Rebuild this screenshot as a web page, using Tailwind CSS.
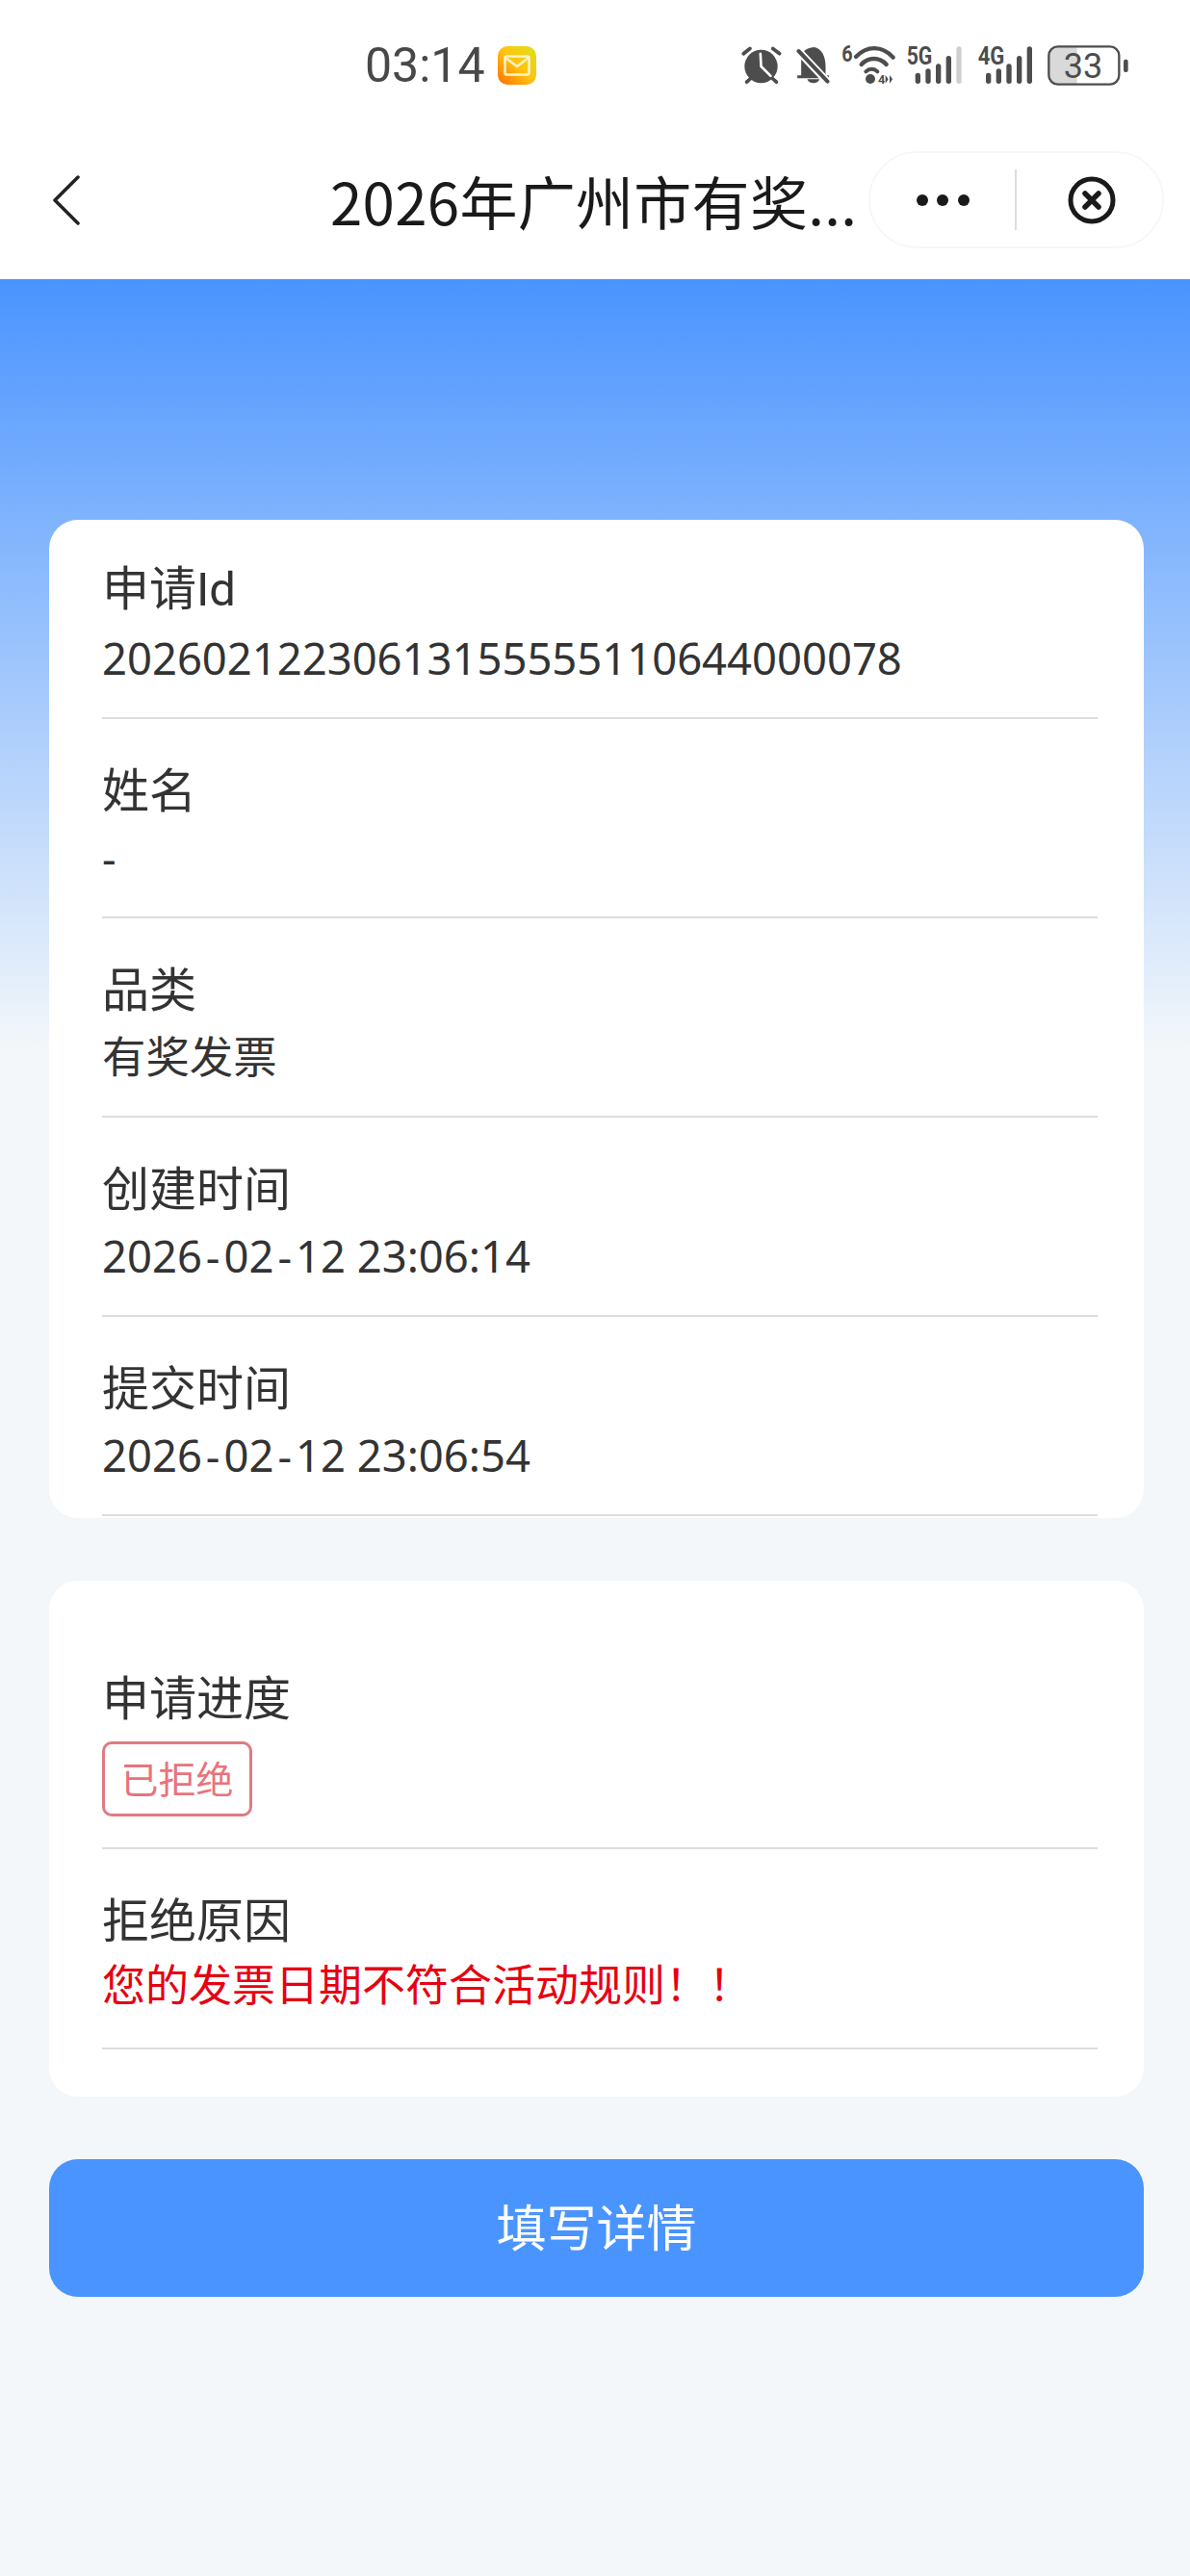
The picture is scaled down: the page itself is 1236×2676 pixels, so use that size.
<!DOCTYPE html>
<html lang="zh-CN">

<head>
    <meta charset="UTF-8" />
    <meta name="viewport" content="width=device-width, initial-scale=1.0" />
    <title>申请详情</title>
    <script src="https://cdn.jsdelivr.net/npm/@tailwindcss/browser@4"></script>
</head>

<body class="bg-[#f3f7fa] text-[#333] font-['Noto_Sans','Noto_Sans_CJK_SC',sans-serif]">
    <div class="w-[1236px] h-[2676px] flex flex-col overflow-hidden">

        <!-- status bar + nav -->
        <header class="bg-white h-[290px] shrink-0">
            <div class="h-[136px] flex items-center pl-[379px]">
                <span class="font-['Roboto',sans-serif] text-[50px] leading-none text-[#484848]">03:14</span>
                <div class="ml-[13px] w-10 h-10 rounded-[10px] bg-linear-to-bl from-[#d9e21a] via-[#ffc20e] to-[#ff6a00] flex items-center justify-center">
                    <svg width="28" height="22" viewBox="0 0 28 22" fill="none" stroke="#fdf3c8" stroke-width="2.5">
                        <rect x="1.5" y="1.5" width="25" height="19" rx="2" />
                        <path d="M2 3l12 9 12-9" />
                    </svg>
                </div>
                <div class="ml-[212px] flex items-center h-[44px]">
                    <!-- alarm -->
                    <svg width="43" height="40" viewBox="85 85 130 120" fill="none" stroke="#4d4d4d" stroke-linecap="round">
                        <circle cx="150" cy="148" r="52" fill="#4d4d4d" stroke="none" />
                        <path d="M95 108l20-16M187 92l21 16M105 197l13-12M198 197l-13-12" stroke-width="11" />
                        <path d="M148 108l2 40 30 30" stroke="#fff" stroke-width="8" />
                    </svg>
                    <!-- muted bell -->
                    <svg class="ml-[14px]" width="36" height="40" viewBox="258 85 107 120" fill="none">
                        <path d="M316 88c24 4 36 28 36 62v26h10v9H264v-9h12v-52c0-20 14-34 40-36z" fill="#4d4d4d" />
                        <path d="M295 188h38c-4 16-34 16-38 0z" fill="#4d4d4d" />
                        <path d="M262 94l98 104" stroke="#fff" stroke-width="24" />
                        <path d="M268 100l90 95" stroke="#4d4d4d" stroke-width="12" stroke-linecap="round" />
                    </svg>
                    <!-- wifi -->
                    <svg class="ml-[12px] overflow-visible" width="56" height="40" viewBox="400 85 168 120" fill="none" stroke="#4d4d4d" stroke-linecap="round">
                        <text x="401" y="134" font-size="70" font-weight="700" fill="#4d4d4d" stroke="none" textLength="34" lengthAdjust="spacingAndGlyphs" class="font-['Roboto',sans-serif]">6</text>
                        <path d="M445 118c34-36 82-36 116 2" stroke-width="13" />
                        <path d="M462 142c22-24 56-24 78 0" stroke-width="13" />
                        <path d="M476 164c10-10 26-10 36 0" stroke-width="12" />
                        <circle cx="490" cy="187" r="15" fill="#4d4d4d" stroke="none" />
                        <text x="514" y="202" font-size="38" font-weight="700" fill="#4d4d4d" stroke="none" class="font-['Roboto',sans-serif]">4</text>
                        <path d="M537 201v-26l9 13zM550 175v26l9-13z" fill="#4d4d4d" stroke="none" />
                    </svg>
                    <!-- 5G -->
                    <svg class="ml-[11px] overflow-visible" width="58" height="40" viewBox="603 85 174 120" fill="#4d4d4d">
                        <text x="605" y="142" font-size="76" font-weight="700" textLength="80" lengthAdjust="spacingAndGlyphs" class="font-['Roboto',sans-serif]">5G</text>
                        <rect x="632" y="168" width="16" height="34" rx="8" />
                        <rect x="664" y="155" width="16" height="47" rx="8" />
                        <rect x="696" y="140" width="16" height="62" rx="8" />
                        <rect x="728" y="115" width="16" height="87" rx="8" />
                        <rect x="760" y="86" width="16" height="116" rx="8" fill="#cfcfcf" />
                    </svg>
                    <!-- 4G -->
                    <svg class="ml-[16px] overflow-visible" width="58" height="40" viewBox="823 85 174 120" fill="#4d4d4d">
                        <text x="825" y="142" font-size="76" font-weight="700" textLength="83" lengthAdjust="spacingAndGlyphs" class="font-['Roboto',sans-serif]">4G</text>
                        <rect x="850" y="168" width="16" height="34" rx="8" />
                        <rect x="882" y="155" width="16" height="47" rx="8" />
                        <rect x="914" y="140" width="16" height="62" rx="8" />
                        <rect x="946" y="115" width="16" height="87" rx="8" />
                        <rect x="978" y="86" width="16" height="116" rx="8" />
                    </svg>
                    <!-- battery -->
                    <svg class="ml-[15px]" width="84" height="42" viewBox="1043 81 252 126">
                        <path d="M1075 86h60v116h-60a27 27 0 0 1-27-27v-62a27 27 0 0 1 27-27z" fill="#d9d9d9" />
                        <rect x="1047" y="85" width="219" height="118" rx="28" fill="none" stroke="#4d4d4d" stroke-width="7" />
                        <text x="1154" y="182" font-size="108" text-anchor="middle" fill="#4d4d4d" class="font-['Roboto',sans-serif]">33</text>
                        <rect x="1280" y="125" width="14" height="40" rx="6" fill="#4d4d4d" />
                    </svg>
                </div>
            </div>
            <nav class="h-[154px] flex items-start">
                <div class="w-[343px] pl-[54px] pt-[46px] shrink-0">
                    <svg width="30" height="52" viewBox="0 0 30 52" fill="none" stroke="#222" stroke-width="3.5" stroke-linecap="round" stroke-linejoin="round">
                        <path d="M27 2L3 26l24 24" />
                    </svg>
                </div>
                <h1 class="w-[549px] pt-[32px] text-[60px] tracking-[0.3px] leading-[80px] text-[#1a1a1a] font-['Noto_Sans_CJK_SC',sans-serif] whitespace-nowrap">2026年广州市有奖...</h1>
                <div class="ml-[10px] mt-[21px] w-[307px] h-[101px] rounded-full border-2 border-[#f7f7f7] bg-white flex items-center">
                    <div class="w-[150px] flex justify-center gap-[9.5px]">
                        <span class="w-3 h-3 rounded-full bg-[#1a1a1a]"></span>
                        <span class="w-3 h-3 rounded-full bg-[#1a1a1a]"></span>
                        <span class="w-3 h-3 rounded-full bg-[#1a1a1a]"></span>
                    </div>
                    <div class="w-[2px] h-[63px] bg-[#ddd]"></div>
                    <svg class="ml-[53px]" width="50" height="50" viewBox="0 0 50 50" fill="none" stroke="#1a1a1a">
                        <circle cx="25" cy="25" r="22" stroke-width="5" />
                        <path d="M18 18l14 14M32 18L18 32" stroke-width="5.5" stroke-linecap="round" />
                    </svg>
                </div>
            </nav>
        </header>

        <main class="flex-1 pl-[51px] pr-[48px] pt-[250px] bg-[linear-gradient(180deg,#4a94ff_0,#f3f7fa_800px)]">
            <section class="bg-white rounded-[30px] pl-[55px] pr-[48px] h-[1037px]">
                <div class="pt-[38px] pb-[27px] border-b-2 border-[#ddd]">
                    <div class="text-[49px] leading-[70px] font-['Roboto','Noto_Sans_CJK_SC',sans-serif]">申请Id</div>
                    <div class="text-[45.4px] leading-[70px]">20260212230613155555110644000078</div>
                </div>
                <div class="pt-[38px] pb-[27px] border-b-2 border-[#ddd]">
                    <div class="text-[49px] leading-[70px]">姓名</div>
                    <div class="text-[45.4px] leading-[70px]">-</div>
                </div>
                <div class="pt-[38px] pb-[27px] border-b-2 border-[#ddd]">
                    <div class="text-[49px] leading-[70px]">品类</div>
                    <div class="text-[45.4px] leading-[70px]">有奖发票</div>
                </div>
                <div class="pt-[38px] pb-[27px] border-b-2 border-[#ddd]">
                    <div class="text-[49px] leading-[70px]">创建时间</div>
                    <div class="text-[45.4px] leading-[70px]">2026<span class="mx-[4px]">-</span>02<span class="mx-[4px]">-</span>12 23:06:14</div>
                </div>
                <div class="pt-[38px] pb-[27px] border-b-2 border-[#ddd]">
                    <div class="text-[49px] leading-[70px]">提交时间</div>
                    <div class="text-[45.4px] leading-[70px]">2026<span class="mx-[4px]">-</span>02<span class="mx-[4px]">-</span>12 23:06:54</div>
                </div>
            </section>

            <section class="mt-[65px] bg-white rounded-[30px] pl-[55px] pr-[48px] pt-[50px] pb-[49px]">
                <div class="pt-[35px] pb-[32px] border-b-2 border-[#ddd]">
                    <div class="text-[49px] leading-[72px]">申请进度</div>
                    <div class="mt-[10px] w-[156px] h-[78px] border-[3px] border-[#e07a82] rounded-[10px] flex items-center justify-center text-[39px] text-[#e8737c]">已拒绝</div>
                </div>
                <div class="pt-[37px] pb-[33px] border-b-2 border-[#ddd]">
                    <div class="text-[49px] leading-[72px]">拒绝原因</div>
                    <div class="text-[45px] leading-[64px] text-[#e60012]">您的发票日期不符合活动规则！！</div>
                </div>
            </section>

            <button class="mt-[65px] w-full h-[143px] pb-[2px] rounded-[30px] bg-[#4a94ff] text-white text-[52px]">填写详情</button>
        </main>
    </div>
</body>

</html>
